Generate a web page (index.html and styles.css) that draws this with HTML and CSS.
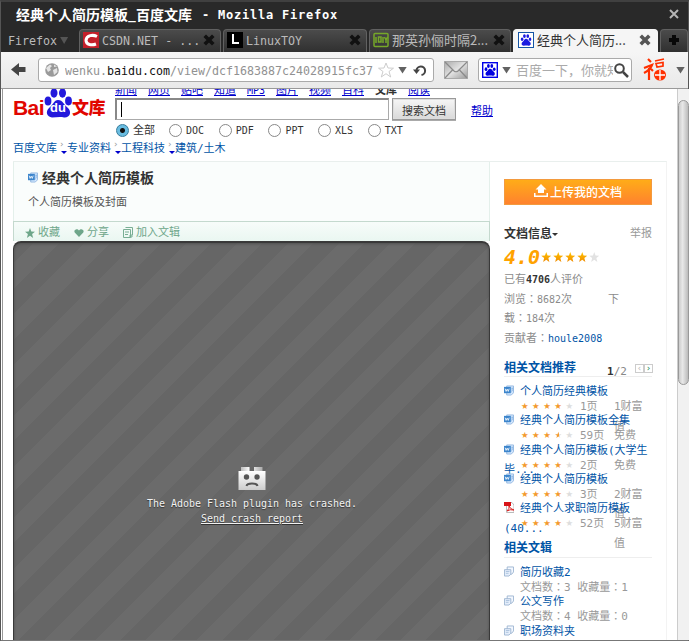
FILE: index.html
```html
<!DOCTYPE html>
<html lang="zh-CN">
<head>
<meta charset="utf-8">
<title>经典个人简历模板_百度文库</title>
<link rel="stylesheet" href="styles.css">
</head>
<body>
<svg class="defs" width="0" height="0">
  <defs>
    <linearGradient id="gold" x1="0" y1="0" x2="0" y2="1"><stop offset="0" stop-color="#ffc400"/><stop offset="1" stop-color="#f08a00"/></linearGradient>
    <linearGradient id="brick" x1="0" y1="0" x2="0" y2="1"><stop offset="0" stop-color="#fff"/><stop offset="1" stop-color="#ccc"/></linearGradient>
    <linearGradient id="stud" x1="0" y1="0" x2="1" y2="0"><stop offset="0" stop-color="#bbb"/><stop offset=".4" stop-color="#fff"/><stop offset="1" stop-color="#aaa"/></linearGradient>
    <linearGradient id="metal" x1="0" y1="0" x2="1" y2="1"><stop offset="0" stop-color="#aaa"/><stop offset=".5" stop-color="#e2e2e2"/><stop offset="1" stop-color="#999"/></linearGradient>
    <symbol id="star" viewBox="0 0 10 10"><path d="M5 0L6.3 3.6 10 3.8 7.1 6.1 8.1 10 5 7.8 1.9 10 2.9 6.1 0 3.8 3.7 3.6Z"/></symbol>
    <symbol id="paw" viewBox="0 0 28 30"><ellipse cx="4" cy="13" rx="3.4" ry="4.6"/><ellipse cx="10" cy="5" rx="3.5" ry="4.7"/><ellipse cx="18.5" cy="5" rx="3.5" ry="4.7"/><ellipse cx="24.5" cy="13" rx="3.4" ry="4.4"/><path d="M14 12C10 12 9 17 5 20 1 24 3 29 8 29.500C12 29.500 16 28.500 20 29.500 26 30 28 24 24 20 20 17 19 12 14 12Z"/></symbol>
    <symbol id="close" viewBox="0 0 12 12"><path d="M3 3L9 9M9 3L3 9" fill="none" stroke-width="3.600" stroke-linecap="square"/></symbol>
    <symbol id="word" viewBox="0 0 11 11"><path d="M3 .5H10.500V8L8 10.500H3Z" fill="#d8eaff" stroke="#8fb5df"/><path d="M0 1.500H7.500V8.500H0Z" fill="#3c85cc"/><path d="M1.300 3.500L2.300 6.500 3.500 4 4.700 6.500 5.700 3.500" fill="none" stroke="#fff" stroke-width=".9"/><path d="M8 3H10M8 5H10M8 7H9" stroke="#6fa2d8"/></symbol>
    <symbol id="pages" viewBox="0 0 11 11"><path d="M3.500 .5H10.500V6L8.500 8.500H3.500Z" fill="#f4f8ff" stroke="#9db5d1"/><path d="M.5 3.500H7.500V8.500L5.500 10.500H.5Z" fill="#e5eefb" stroke="#9db5d1"/><path d="M2 5.500H6M2 7.500H5" stroke="#a9c0dc"/></symbol>
  </defs>
</svg>
<div class="window">
  <header class="titlebar">
    <span class="title-cn">经典个人简历模板_百度文库</span><span class="title-en">- Mozilla Firefox</span>
    <svg class="win-close" width="10" height="10"><path d="M1 1L9 9M9 1L1 9" stroke="#b5b5b5" stroke-width="2"/></svg>
  </header>
  <nav class="tabs">
    <div class="app-menu">Firefox<i class="tri dim"></i></div>
    <div class="tab t1"><svg width="16" height="16"><path d="M0 0H16V16H0Z" fill="#c4202a"/><path d="M14 4.500C10 2.500 3.500 3 3 8.200 3 13 9 13.500 13 12" fill="none" stroke="#fff" stroke-width="3"/></svg><span>CSDN.NET - ...</span><svg class="x" width="12" height="12"><use href="#close"/></svg></div>
    <div class="tab t2"><svg width="16" height="16"><path d="M0 0H16V16H0Z" fill="#000"/><path d="M6 2V11H12" fill="none" stroke="#fff" stroke-width="2"/></svg><span>LinuxTOY</span><svg class="x" width="12" height="12"><use href="#close"/></svg></div>
    <div class="tab t3"><svg width="16" height="16" fill="none" stroke="#76a829" stroke-width="1.500"><rect x="1" y="1.500" width="14" height="13" rx="1"/><path d="M3 5V11M5.500 5H8V10H5.500ZM10 5V11M11.500 5L13 8 14.500 5M13 8V11"/></svg><span>那英孙俪时隔2...</span><svg class="x" width="12" height="12"><use href="#close"/></svg></div>
    <div class="tab t4"><svg width="16" height="16"><rect x=".5" y=".5" width="15" height="15" fill="#fff" stroke="#1555a5"/><use href="#paw" x="2.500" y="2" width="11" height="12" fill="#1a1ae0"/></svg><span>经典个人简历...</span><svg class="x" width="12" height="12"><use href="#close"/></svg></div>
    <div class="tab plus"><svg width="12" height="12"><path d="M6 1V11M1 6H11" stroke="#080808" stroke-width="4"/></svg></div>
  </nav>
  <div class="toolbar">
    <svg class="back" width="15" height="14"><path d="M0 6.500L8 0V4H14.500V9H8V13Z" fill="#444"/></svg>
    <div class="field url">
      <svg width="14" height="14"><circle cx="7" cy="7" r="6.800" fill="#9a9a9a"/><path d="M1 5L5 1.500 7 3 5 5 6 7 3 9ZM8 7L12 5 12.500 9 9 12ZM9 1.500L12 3.500 9 4Z" fill="#e4e4e4"/></svg>
      <span class="addr">wenku.<b>baidu.com</b>/view/dcf1683887c24028915fc37</span>
      <svg width="16" height="16" fill="#fff" stroke="#cdcdcd"><path d="M8 1L10 6 15.500 6.200 11 9.500 12.700 15 8 11.700 3.300 15 5 9.500 .5 6.200 6 6Z"/></svg>
      <i class="tri"></i>
      <svg width="14" height="13"><path d="M3.500 6.500A4.300 4.300 0 1 1 8.500 11" fill="none" stroke="#444" stroke-width="2"/><path d="M0 5.500H7L3.500 10Z" fill="#444"/></svg>
    </div>
    <svg class="mail" width="24" height="18"><rect x=".5" y=".5" width="23" height="17" fill="url(#metal)" stroke="#aaa"/><path d="M1 1L10 10Q12 11.500 14 10L23 1M1 17L8.500 9M23 17L15.500 9" fill="none" stroke="#8a8a8a" stroke-width="1.200"/></svg>
    <div class="field search">
      <svg width="16" height="16"><rect x=".7" y=".7" width="14.600" height="14.600" fill="#fff" stroke="#0000e8" stroke-width="1.400"/><use href="#paw" x="2" y="2" width="12" height="12" fill="#0000e0"/></svg>
      <i class="tri"></i><span class="hint">百度一下，你就知道</span>
      <svg class="lens" width="15" height="15"><circle cx="5.500" cy="5.500" r="4.300" fill="#fff" stroke="#444" stroke-width="2"/><path d="M9 9L14 14" stroke="#444" stroke-width="2.500"/></svg>
    </div>
    <svg class="fu" width="24" height="24" fill="none" stroke="#ff3000"><path d="M5 1L8 4M1 10L9 7Q7 12 1 15M6 10V22M8 11L10 13" stroke-width="2.200"/><path d="M12 3L21 1M13 5.500L20 4.500V8L14 9Z" stroke-width="1.700"/><ellipse cx="17" cy="17" rx="6" ry="5.500" fill="#ff3000" stroke="none"/><path d="M17 12V22M12 17H22" stroke="#fff" stroke-width="1.300"/></svg>
    <i class="tri"></i>
  </div>
  <div class="viewport">
    <main class="page">
      <div class="masthead">
        <div class="logo"><span class="bai">Bai</span><span class="pawbox"><svg width="28" height="30"><use href="#paw" width="28" height="30" fill="#2319dc"/></svg><em>du</em></span><span class="wk">文库</span></div>
        <div class="searcharea">
          <div class="links"><a>新闻</a><a>网页</a><a>贴吧</a><a>知道</a><a class="mp">MP3</a><a>图片</a><a>视频</a><a>百科</a><b>文库</b><a>阅读</a></div>
          <div class="query"><div class="input"></div><div class="button">搜索文档</div><a>帮助</a></div>
          <div class="types"><label><i class="on"></i>全部</label><label><i></i>DOC</label><label><i></i>PDF</label><label><i></i>PPT</label><label><i></i>XLS</label><label><i></i>TXT</label></div>
        </div>
      </div>
      <div class="crumbs"><span>百度文库</span><i></i><span>专业资料</span><i></i><span>工程科技</span><i></i><span>建筑/土木</span></div>
      <div class="columns">
        <section class="doc">
          <div class="dochead"><h1><svg width="10" height="11"><use href="#word"/></svg>经典个人简历模板</h1><p>个人简历模板及封面</p></div>
          <div class="actions">
            <span><svg width="10" height="10" fill="#6ea68a"><use href="#star"/></svg>收藏</span>
            <span><svg width="10" height="10" fill="#6ea68a"><path d="M5 9L.7 4.500C-.8 2 3 -.5 5 2.500 7 -.5 10.800 2 9.300 4.500Z"/></svg>分享</span>
            <span><svg width="10" height="11" fill="none" stroke="#79ae94"><path d="M2.500 .5H9.500V8M.5 2.500H7.500V10.500H.5ZM2 5H6M2 7.500H5M6 9H10M8 7V11"/></svg>加入文辑</span>
          </div>
          <div class="plugin">
            <svg width="28" height="24"><path d="M3 0H11.500V5H3ZM16 0H24.500V5H16Z" fill="url(#stud)"/><path d="M.5 4H27.500V23H.5Z" fill="url(#brick)"/><circle cx="8.500" cy="10" r="2.700" fill="#555"/><circle cx="19" cy="10" r="2.700" fill="#555"/><path d="M8.500 19Q9 16.500 14 16.500T19.500 19" fill="none" stroke="#555" stroke-width="2"/></svg>
            <p>The Adobe Flash plugin has crashed.</p><a>Send crash report</a>
          </div>
        </section>
        <aside class="side">
          <div class="upload"><svg width="14" height="13" fill="#fff"><path d="M7 0L12.500 5.500H10V9H4V5.500H1.500ZM0 9H1.500V11.500H12.500V9H14V13H0Z"/></svg>上传我的文档</div>
          <div class="infohead"><b>文档信息</b><i></i><span>举报</span></div>
          <div class="score"><b>4.0</b><svg width="60" height="10" fill="url(#gold)"><use href="#star" width="10.500" height="10"/><use href="#star" x="12" width="10.500" height="10"/><use href="#star" x="24" width="10.500" height="10"/><use href="#star" x="36" width="10.500" height="10"/><use href="#star" x="48" width="10.500" height="10" fill="#e2e2e2"/></svg></div>
          <div class="facts"><p>已有<b>4706</b>人评价</p><p>浏览<q lang="zh-TW">：</q><small>8682</small>次<span class="gap"></span>下</p><p>载<q lang="zh-TW">：</q><small>184</small>次</p><p>贡献者<q lang="zh-TW">：</q><a>houle2008</a></p></div>
          <div class="sechead rel"><b>相关文档推荐</b><span class="num"><strong>1</strong>/2</span><span class="pager"><i class="off">‹</i><i>›</i></span></div>
          <ul class="related">
            <li><svg width="10" height="11"><use href="#word"/></svg><a>个人简历经典模板</a><div class="meta"><span class="stars">★★★★<s>★</s></span><span class="pp">1页</span><span class="cost">1财富值</span></div></li>
            <li><svg width="10" height="11"><use href="#word"/></svg><a>经典个人简历模板全集</a><div class="meta"><span class="stars">★★★<u>★</u><s>★</s></span><span class="pp">59页</span><span class="cost">免费</span></div></li>
            <li><svg width="10" height="11"><use href="#word"/></svg><a>经典个人简历模板(大学生<br>毕...</a><div class="meta"><span class="stars">★★★★<s>★</s></span><span class="pp">2页</span><span class="cost">免费</span></div></li>
            <li><svg width="10" height="11"><use href="#word"/></svg><a>经典个人简历模板</a><div class="meta"><span class="stars">★★★★<s>★</s></span><span class="pp">3页</span><span class="cost">2财富值</span></div></li>
            <li><svg width="10" height="11"><path d="M2.500 .5H8L10 3V10.500H2.500Z" fill="#fff" stroke="#bbb"/><path d="M0 0H7V4H0Z" fill="#d81418"/><path d="M3 9Q6 6 5 4Q6 7 10 8Q6 7 3 9" fill="none" stroke="#d82020"/></svg><a>经典个人求职简历模板<br>(40...</a><div class="meta"><span class="stars">★★★★<s>★</s></span><span class="pp">52页</span><span class="cost">5财富值</span></div></li>
          </ul>
          <div class="sechead albums"><b>相关文辑</b></div>
          <ul class="albumlist">
            <li><svg width="10" height="11"><use href="#pages"/></svg><a>简历收藏2</a><p>文档数<q lang="zh-TW">：</q>3 收藏量<q lang="zh-TW">：</q>1</p></li>
            <li><svg width="10" height="11"><use href="#pages"/></svg><a>公文写作</a><p>文档数<q lang="zh-TW">：</q>4 收藏量<q lang="zh-TW">：</q>0</p></li>
            <li><svg width="10" height="11"><use href="#pages"/></svg><a>职场资料夹</a></li>
          </ul>
        </aside>
      </div>
    </main>
    <div class="scroll"><div class="thumb"></div></div>
  </div>
</div>
</body>
</html>
```
FILE: styles.css
```css
* { box-sizing: border-box; margin: 0; padding: 0; }
body { width: 689px; height: 641px; overflow: hidden; font: 11px/20px "DejaVu Sans Mono", "Noto Sans CJK SC", sans-serif; color: #333; }
.defs { display: block; position: absolute; }
svg { display: block; flex: none; }
i { font-style: normal; }
q { quotes: none; font-family: "Noto Sans CJK TC", sans-serif; line-height: 0; }
ul { list-style: none; }
span, a, b { white-space: nowrap; }
.window { width: 689px; height: 641px; border: 1px solid #555; border-top: 2px solid #404040; border-bottom-color: #777; display: flex; flex-direction: column; background: #fff; }
.titlebar { height: 26px; flex: none; background: #292929; color: #fff; display: flex; align-items: center; padding: 0 9px 0 15px; font-weight: bold; }
.title-cn { font-size: 14px; width: 186px; font-family: "Noto Sans CJK SC", sans-serif; letter-spacing: 0; margin-top: -2px; }
.title-en { font-size: 12px; letter-spacing: .78px; }
.win-close { margin-left: auto; margin-top: -3px; }
.tabs { height: 24px; flex: none; display: flex; background: #292929; font-size: 13px; color: #bbb; }
.app-menu { width: 78px; flex: none; padding-left: 7px; display: flex; align-items: center; gap: 3px; font-size: 11.670px; padding-top: 1px; }
.tri { width: 9px; height: 7px; background: #626262; clip-path: polygon(0 0, 100% 0, 50% 100%); flex: none; }
.tri.dim { width: 8px; background: #555; }
.tab { display: flex; align-items: center; gap: 3px; margin-top: 1px; padding: 0 5px; background: linear-gradient(#4b4b4b, #303030); border: 1px solid #616161; border-bottom: 0; border-radius: 4px 4px 0 0; margin-right: 2px; flex: none; }
.tab > svg:first-child { margin-top: -2px; }
.tab span { font-size: 11.670px; font-family: "DejaVu Sans Mono", "Noto Sans CJK SC", sans-serif; }
.t3 span, .t4 span { font-size: 13px; font-family: "Noto Sans CJK SC", sans-serif; margin-top: -2px; }
.tab .x { margin-left: auto; margin-top: -2px; stroke: #111; }
.t1 { width: 142px; padding-left: 3px; }
.t2 { width: 144px; padding-left: 3px; }
.t3 { width: 142px; padding-left: 3px; }
.t4 { width: 145px; padding-left: 4px; padding-right: 6px; background: #f5f5f5; border-color: #f5f5f5; color: #333; }
.t4 .x { stroke: #555; }
.plus { width: 28px; padding-left: 7px; margin-right: 0; }
.toolbar { height: 37px; flex: none; display: flex; align-items: center; background: linear-gradient(#f5f5f5, #e9e9e9); border-bottom: 1px solid #999; padding: 0 3px 0 10px; }
.back { margin-right: 12px; }
.field { height: 24px; border: 1px solid #aaa; border-radius: 3px; background: #fff; display: flex; align-items: center; flex: none; }
.url { width: 396px; padding: 0 5px 0 6px; gap: 6px; }
.addr { font-size: 11.630px; color: #919191; width: 309px; flex: none; overflow: hidden; padding-top: 1px; }
.addr b { font-weight: normal; color: #111; }
.url .tri { margin-left: -2px; }
.url svg:nth-of-type(2) { margin-left: -2px; }
.mail { margin: 0 10px; }
.search { width: 154px; padding-left: 3px; }
.search .tri { margin: 0 5px 0 4px; }
.hint { width: 97px; overflow: hidden; font: 13px/20px "Noto Sans CJK SC", sans-serif; color: #aaa; }
.lens { margin-left: 1px; }
.fu { margin: 0 9px 0 11px; }
.viewport { flex: 1; min-height: 0; display: flex; border-left: 1px solid #999; margin-left: 1px; }
.page { width: 674px; overflow: hidden; padding-left: 10px; flex: none; }
.masthead { display: flex; height: 50px; }
.logo { width: 102px; display: flex; height: 30px; color: #e10600; }
.bai { font: bold 21px/38px "Liberation Sans", sans-serif; width: 31px; letter-spacing: -.6px; }
.pawbox { width: 28px; position: relative; }
.pawbox svg { margin-top: -1px; }
.pawbox em { position: absolute; left: 6px; top: 9px; color: #fff; font: bold 13px/20px "Liberation Sans", sans-serif; }
.wk { font: 900 17px/36px "Noto Sans CJK SC", sans-serif; letter-spacing: -.5px; }
.searcharea { width: 520px; }
.links { display: flex; gap: 11px; line-height: 14px; margin-top: -5px; height: 14px; }
.links a, .query a { color: #0000cc; text-decoration: underline; }
.links a, .links b { width: 22px; flex: none; }
.links .mp { width: 18px; font-size: 10px; }
.query { display: flex; height: 22px; align-items: center; }
.input { width: 274px; height: 22px; border: 1px solid #aaa; border-top: 2px solid #888; border-left: 2px solid #888; padding: 2px 4px; }
.input::before { content: ""; display: block; width: 1px; height: 15px; background: #000; }
.button { width: 64px; height: 22px; margin: 0 15px 0 3px; border: 1px solid #999; box-shadow: inset 0 0 0 1px #ddd, 0 1px 0 #aaa; background: linear-gradient(#f6f6f6, #d9d9d9); text-align: center; line-height: 25px; }
.query a { padding-top: 5px; }
.types { display: flex; height: 20px; margin-left: 1px; }
.types label { width: 49.700px; display: flex; align-items: center; gap: 4px; font-size: 10px; line-height: 20px; padding-top: 1px; }
.types label:first-child { width: 53px; font-size: 11px; }
.types i { width: 13px; height: 13px; border: 1px solid #888; border-radius: 50%; background: #fff; flex: none; }
.types .on { background: radial-gradient(circle, #111 0 2px, #69bce0 3px); border-color: #357b9b; }
.crumbs { display: flex; height: 22px; line-height: 20px; color: #0054a6; }
.crumbs i { width: 10px; height: 18px; position: relative; }
.crumbs i::before { content: "›"; position: absolute; left: 2px; top: -5px; font-size: 9px; color: #999; }
.crumbs i::after { content: ""; position: absolute; left: 4px; top: 12px; border: 3px solid transparent; border-width: 3px 3px 0; border-top-color: #0000cc; }
.columns { display: flex; width: 654px; border-top: 1px solid #e9efed; border-right: 1px solid #f3f3f3; height: 480px; }
.doc { width: 477px; flex: none; }
.dochead { height: 59px; background: #fafdfc; border: 1px solid #e4f0eb; border-width: 0 1px; padding: 5px 14px; }
h1 { display: flex; align-items: center; gap: 4px; font: bold 14px/20px "Noto Sans CJK SC", sans-serif; }
.dochead p { margin-top: 6px; color: #555; }
.actions { height: 20px; display: flex; gap: 13px; padding: 2px 11px 0; border: 1px solid #c4d9ce; border-bottom: 0; background: linear-gradient(#f7fcfa, #eaf7f1); color: #6ea68a; }
.actions span { display: flex; align-items: center; gap: 3px; line-height: 20px; }
.actions span + span { padding-left: 1px; }
.plugin { height: 401px; border-radius: 8px 8px 0 0; border: 1px solid #393939; border-top-width: 2px; border-bottom: 0; background: repeating-linear-gradient(135deg, #666 0 14px, #6b6b6b 14px 32px, #666 32px 36px); box-shadow: inset 0 1px 3px #505050; display: flex; flex-direction: column; align-items: center; padding: 224px 0 0 1px; color: #f2f2f2; font-size: 9.970px; line-height: 15px; text-shadow: 0 1px 1px #333; }
.plugin p { margin-top: 5px; white-space: nowrap; }
.plugin a { text-decoration: underline; }
.side { width: 148px; margin-left: 14px; padding-top: 17px; flex: none; color: #8b8b8b; }
.upload { height: 26px; background: linear-gradient(#ffac18, #ff822e); border: 1px solid #f39a3e; color: #fff; display: flex; align-items: center; justify-content: center; gap: 2px; font: 500 12px/24px "Noto Sans CJK SC", sans-serif; }
.upload svg { margin-top: -3px; }
.infohead { display: flex; align-items: center; margin-top: 19px; height: 20px; color: #333; }
.infohead b { font-size: 12px; }
.infohead i { border: 3px solid transparent; border-top-color: #333; border-bottom: 0; }
.infohead span { margin-left: auto; color: #999; }
.score { height: 26px; display: flex; align-items: center; gap: 1px; }
.score b { font: italic bold 20px/26px "DejaVu Sans Mono", monospace; color: #ffa200; width: 36px; }
.facts { height: 79px; }
.facts p { height: 19.700px; line-height: 20px; white-space: nowrap; }
.facts b, .facts small { font-size: 10px; }
.facts b { color: #333; }
.facts a { color: #0054a6; font-size: 10px; }
.gap { display: inline-block; width: 36px; }
.sechead { display: flex; height: 20px; border-bottom: 1px solid #eee; color: #0054a6; font-size: 12px; line-height: 22px; }
.rel { margin-top: 8px; }
.num { color: #888; font-size: 11px; margin-left: 31px; padding-top: 4px; }
.num strong { color: #333; }
.pager { display: flex; margin: 7px 0 0 8px; height: 9px; }
.pager i { width: 9px; height: 9px; border: 1px solid #ccc; font-size: 9px; line-height: 6px; text-align: center; color: #168b50; }
.pager .off { color: #bbb; }
.related { height: 156px; margin-top: 5px; }
.related li, .albumlist li { height: 29.300px; position: relative; line-height: 19.500px; }
.related svg, .albumlist svg { float: left; margin: 3px 6px 0 0; }
.related a, .albumlist a { color: #0054a6; }
.meta { position: absolute; left: 16px; top: 15px; width: 132px; display: flex; color: #999; }
.stars { width: 60px; flex: none; color: #f39a2d; font-size: 8.500px; letter-spacing: 3.500px; padding-left: 1px; font-family: "DejaVu Sans", sans-serif; }
.stars s { text-decoration: none; color: #ddd; }
.stars u { text-decoration: none; background: linear-gradient(90deg, #f39a2d 45%, #ddd 45%); background-clip: text; color: transparent; }
.pp { width: 34px; flex: none; }
.cost { width: 38px; flex: none; white-space: normal; }
.albums { height: 20px; line-height: 21px; }
.albumlist { margin-top: 5px; }
.albumlist p { line-height: 10px; padding-left: 16px; color: #999; white-space: nowrap; }
.scroll { flex: 1; background: #f1f1f1; border-left: 1px solid #ccc; padding-top: 11px; }
.thumb { height: 285px; width: 11px; border: 1px solid #999; border-radius: 6px; background: linear-gradient(90deg, #ccc, #e8e8e8 40%, #bbb); }
```
